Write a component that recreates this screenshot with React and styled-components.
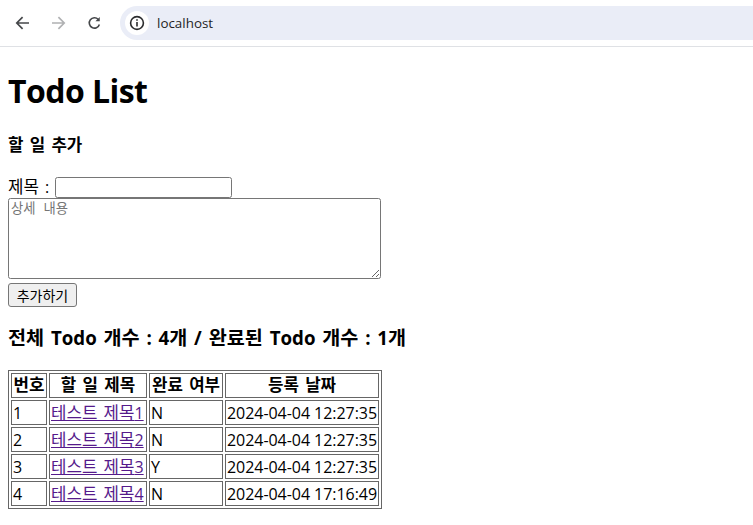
import React from 'react';
import styled, { createGlobalStyle } from 'styled-components';

const GlobalStyle = createGlobalStyle`
  html, body {
    margin: 0;
    padding: 0;
    background: #fff;
    overflow: hidden;
  }
  body {
    font-family: "Open Sans", "Noto Sans CJK KR", sans-serif;
    font-size: 16px;
    color: #000;
    word-spacing: 0.12em;
  }
`;

const Toolbar = styled.div`
  height: 46px;
  border-bottom: 1px solid #dfe1e5;
  display: flex;
  align-items: center;
  padding-left: 15px;
  background: #fff;
`;

const NavButton = styled.div`
  width: 15px;
  height: 16px;
  margin-right: 21px;
  display: flex;
  color: ${p => (p.$off ? '#b0b1b3' : '#45474a')};
`;

const AddressBar = styled.div`
  flex: 1;
  height: 34px;
  margin-left: -3px;
  border-radius: 17px 0 0 17px;
  background: #eaedf7;
  display: flex;
  align-items: center;
  padding-left: 5px;
  font-size: 13.4px;
  color: #1f1f1f;
`;

const InfoChip = styled.div`
  width: 24px;
  height: 24px;
  border-radius: 50%;
  background: #fff;
  display: flex;
  align-items: center;
  justify-content: center;
  margin-right: 8px;
`;

const Page = styled.div`
  padding: 0 8px;
`;

const Title = styled.h1`
  font-size: 32px;
  line-height: 44px;
  font-weight: 700;
  letter-spacing: -0.55px;
  word-spacing: 0;
  margin: 22px 0 21px;
`;

const SubTitle = styled.h4`
  font-size: 16px;
  line-height: 22px;
  font-weight: 700;
  margin: 0 0 21px;
`;

const FormRow = styled.div`
  display: flex;
  align-items: flex-end;
  height: 21px;
  line-height: 21px;
`;

const Label = styled.label`
  margin-right: 6px;
`;

const TitleInput = styled.input`
  width: 177px;
  height: 21px;
  box-sizing: border-box;
  border: 1px solid #767676;
  border-radius: 2.5px;
  padding: 1px 2px;
  margin: 0;
  background: #fff;
`;

const Detail = styled.textarea`
  display: block;
  width: 373px;
  height: 81px;
  box-sizing: border-box;
  border: 1px solid #767676;
  border-radius: 2.5px;
  padding: 2px;
  margin: 0;
  font-family: "DejaVu Sans Mono", "Noto Sans CJK KR", monospace;
  font-size: 13.33px;
  line-height: 15px;
  &::placeholder {
    color: #757575;
  }
`;

const AddButton = styled.button`
  display: block;
  width: 69px;
  height: 24px;
  margin: 4px 0 0;
  padding: 0;
  box-sizing: border-box;
  border: 1px solid #767676;
  border-radius: 3px;
  background: #efefef;
  font-family: "Noto Sans CJK KR", sans-serif;
  font-size: 14px;
  color: #000;
`;

const Summary = styled.h3`
  font-size: 18.72px;
  line-height: 26px;
  font-weight: 700;
  margin: 18px 0 19px;
`;

const TodoTable = styled.table`
  border: 1px solid #666;
  border-collapse: separate;
  border-spacing: 2px;
  line-height: 21px;
`;

const HeadCell = styled.th`
  border: 1px solid #666;
  padding: 1px;
  width: ${p => p.$w}px;
  min-width: ${p => p.$w}px;
  font-weight: 700;
  text-align: center;
  white-space: nowrap;
`;

const Cell = styled.td`
  border: 1px solid #666;
  padding: 2px 1px 0;
  white-space: nowrap;
  word-spacing: ${p => (p.$date ? '0' : 'inherit')};
  letter-spacing: ${p => (p.$date ? '-0.05px' : 'normal')};
  text-align: ${p => (p.$date ? 'center' : 'left')};
`;

const TitleLink = styled.a`
  color: #551a8b;
  text-decoration: underline;
`;

const Hangul = styled.span`
  font-size: 1.05em;
  line-height: 1;
`;

// hangul in the reference runs wider than the installed CJK face
const Ko = ({ children }) =>
  children.split(/([가-힣]+(?: [가-힣]+)*)/).map((part, i) =>
    i % 2 ? <Hangul key={i}>{part}</Hangul> : part
  );

const todos = [
  { id: 1, title: '테스트 제목1', done: 'N', date: '2024-04-04 12:27:35' },
  { id: 2, title: '테스트 제목2', done: 'N', date: '2024-04-04 12:27:35' },
  { id: 3, title: '테스트 제목3', done: 'Y', date: '2024-04-04 12:27:35' },
  { id: 4, title: '테스트 제목4', done: 'N', date: '2024-04-04 17:16:49' },
];

export default function App() {
  return (
    <>
      <GlobalStyle />
      <Toolbar>
        <NavButton>
          <svg width="15" height="16" viewBox="0 0 15 16" fill="none" stroke="currentColor" strokeWidth="1.7">
            <path d="M14 8H2M7.6 2.2L1.8 8l5.8 5.8" />
          </svg>
        </NavButton>
        <NavButton $off>
          <svg width="15" height="16" viewBox="0 0 15 16" fill="none" stroke="currentColor" strokeWidth="1.7">
            <path d="M1 8h12M7.4 2.2L13.2 8l-5.8 5.8" />
          </svg>
        </NavButton>
        <NavButton>
          <svg width="16" height="16" viewBox="0 0 16 16" fill="none" stroke="currentColor" strokeWidth="1.7">
            <path d="M13.2 9.5A5.5 5.5 0 1 1 12 4.2" />
            <path d="M13.6 1.5v4.6H9" fill="currentColor" stroke="none" />
          </svg>
        </NavButton>
        <AddressBar>
          <InfoChip>
            <svg width="16" height="16" viewBox="0 0 16 16" fill="none" stroke="#2b2c2e" strokeWidth="1.6">
              <circle cx="8" cy="8" r="6.4" />
              <path d="M8 7v4.4M8 4.3v1.5" />
            </svg>
          </InfoChip>
          localhost
        </AddressBar>
      </Toolbar>
      <Page>
        <Title>Todo List</Title>
        <SubTitle><Ko>할 일 추가</Ko></SubTitle>
        <FormRow>
          <Label><Ko>제목 :</Ko></Label>
          <TitleInput type="text" />
        </FormRow>
        <Detail placeholder="상세 내용" />
        <AddButton>추가하기</AddButton>
        <Summary><Ko>전체 Todo 개수 : 4개 / 완료된 Todo 개수 : 1개</Ko></Summary>
        <TodoTable>
          <thead>
            <tr>
              <HeadCell $w={32}><Ko>번호</Ko></HeadCell>
              <HeadCell $w={94}><Ko>할 일 제목</Ko></HeadCell>
              <HeadCell $w={70}><Ko>완료 여부</Ko></HeadCell>
              <HeadCell $w={149}><Ko>등록 날짜</Ko></HeadCell>
            </tr>
          </thead>
          <tbody>
            {todos.map(todo => (
              <tr key={todo.id}>
                <Cell>{todo.id}</Cell>
                <Cell><TitleLink href="#"><Ko>{todo.title}</Ko></TitleLink></Cell>
                <Cell>{todo.done}</Cell>
                <Cell $date>{todo.date}</Cell>
              </tr>
            ))}
          </tbody>
        </TodoTable>
      </Page>
    </>
  );
}
